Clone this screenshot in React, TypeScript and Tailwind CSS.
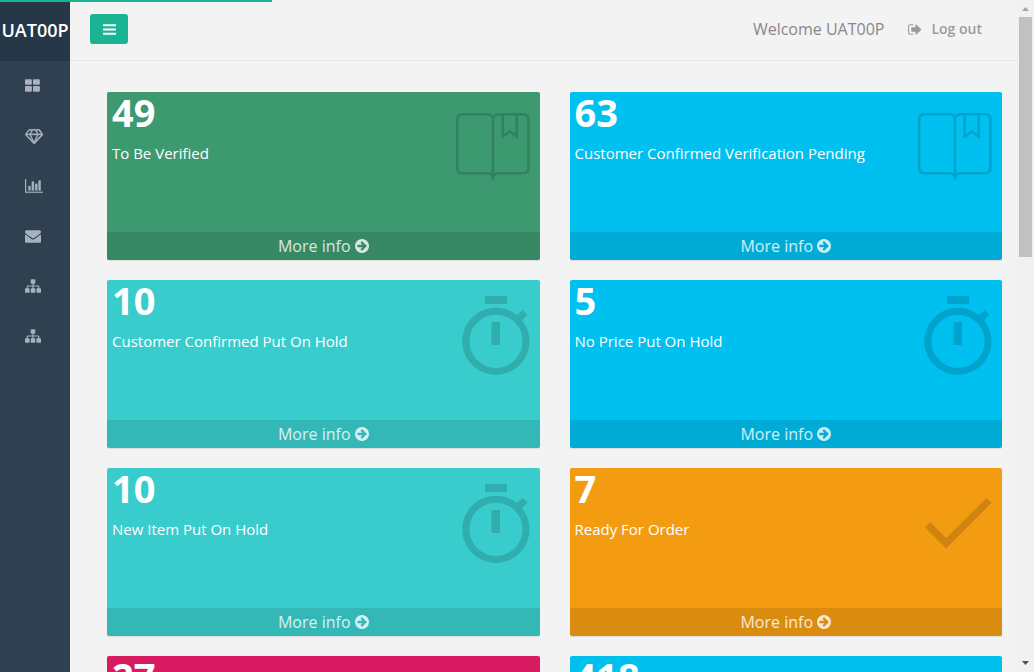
import React from "react";

type IconProps = { d: string; viewBox: string; className: string };

function Icon({ d, viewBox, className }: IconProps) {
  return (
    <svg viewBox={viewBox} className={className} fill="currentColor" aria-hidden="true">
      <path d={d} />
    </svg>
  );
}

const SQUARE = "0 0 1792 1792";
const WIDE = "0 0 2048 1792";

const thLarge =
  "M832 1024v384q0 52-38 90t-90 38h-512q-52 0-90-38t-38-90v-384q0-52 38-90t90-38h512q52 0 90 38t38 90zm0-768v384q0 52-38 90t-90 38h-512q-52 0-90-38t-38-90v-384q0-52 38-90t90-38h512q52 0 90 38t38 90zm896 768v384q0 52-38 90t-90 38h-512q-52 0-90-38t-38-90v-384q0-52 38-90t90-38h512q52 0 90 38t38 90zm0-768v384q0 52-38 90t-90 38h-512q-52 0-90-38t-38-90v-384q0-52 38-90t90-38h512q52 0 90 38t38 90z";
const diamond =
  "M212 768l623 665-300-665h-323zm812 772l349-772h-698zm-486-900l204-384h-262l-288 384h346zm675 793l623-665h-323zm-538-793h698l-204-384h-290zm835 0h346l-288-384h-262zm163-480l384 512q18 23 17 51t-21 49l-960 1024q-18 20-47 20t-47-20l-960-1024q-20-20-21-49t17-51l384-512q18-26 51-26h1152q33 0 51 26z";
const barChart =
  "M640 896v512h-256v-512h256zm384-512v1024h-256v-1024h256zm1024 1152v128h-2048v-1536h128v1408h1920zm-640-896v768h-256v-768h256zm384-384v1152h-256v-1152h256z";
const envelope =
  "M1792 710v794q0 66-47 113t-113 47h-1472q-66 0-113-47t-47-113v-794q44 49 101 87 362 246 497 345 57 42 92.5 65.5t94.5 48 110 24.5h2q51 0 110-24.5t94.5-48 92.5-65.5q170-123 498-345 57-39 100-87zm0-294q0 79-49 151t-122 123q-376 261-468 325-10 7-42.5 31t-54 38.5-52 32.5-57.5 27-50 9h-2q-23 0-50-9t-57.5-27-52-32.5-54-38.5-42.5-31q-91-64-262-182.5t-205-142.5q-62-42-117-115.5t-55-136.5q0-78 41.5-130t118.5-52h1472q65 0 112.5 47t47.5 113z";
const sitemap =
  "M1792 1248v320q0 40-28 68t-68 28h-320q-40 0-68-28t-28-68v-320q0-40 28-68t68-28h96v-192h-512v192h96q40 0 68 28t28 68v320q0 40-28 68t-68 28h-320q-40 0-68-28t-28-68v-320q0-40 28-68t68-28h96v-192h-512v192h96q40 0 68 28t28 68v320q0 40-28 68t-68 28h-320q-40 0-68-28t-28-68v-320q0-40 28-68t68-28h96v-192q0-52 38-90t90-38h512v-192h-96q-40 0-68-28t-28-68v-320q0-40 28-68t68-28h320q40 0 68 28t28 68v320q0 40-28 68t-68 28h-96v192h512q52 0 90 38t38 90v192h96q40 0 68 28t28 68z";
const bars =
  "M1664 1344v128q0 26-19 45t-45 19h-1408q-26 0-45-19t-19-45v-128q0-26 19-45t45-19h1408q26 0 45 19t19 45zm0-512v128q0 26-19 45t-45 19h-1408q-26 0-45-19t-19-45v-128q0-26 19-45t45-19h1408q26 0 45 19t19 45zm0-512v128q0 26-19 45t-45 19h-1408q-26 0-45-19t-19-45v-128q0-26 19-45t45-19h1408q26 0 45 19t19 45z";
const signOut =
  "M704 1440q0 4 1 20t.5 26.5-3 23.5-10 19.5-20.5 6.5h-320q-119 0-203.5-84.5t-84.5-203.5v-704q0-119 84.5-203.5t203.5-84.5h320q13 0 22.5 9.5t9.5 22.5q0 4 1 20t.5 26.5-3 23.5-10 19.5-20.5 6.5h-320q-66 0-113 47t-47 113v704q0 66 47 113t113 47h312l11.5 1 11.5 3 8 5.5 7 9 2 13.5zm928-544q0 26-19 45l-544 544q-19 19-45 19t-45-19-19-45v-288h-448q-26 0-45-19t-19-45v-384q0-26 19-45t45-19h448v-288q0-26 19-45t45-19 45 19l544 544q19 19 19 45z";
const arrowCircle =
  "M1413 896q0-27-18-45l-91-91-362-362q-18-18-45-18t-45 18l-91 91q-18 18-18 45t18 45l189 189h-502q-26 0-45 19t-19 45v128q0 26 19 45t45 19h502l-189 189q-19 19-19 45t19 45l91 91q18 18 45 18t45-18l362-362 91-91q18-18 18-45zm251 0q0 209-103 385.5t-279.5 279.5-385.5 103-385.5-103-279.5-279.5-103-385.5 103-385.5 279.5-279.5 385.5-103 385.5 103 279.5 279.5 103 385.5z";

const navItems = [
  { label: "Dashboard", d: thLarge, viewBox: "64 0 1792 1792", className: "h-4 w-4" },
  { label: "Products", d: diamond, viewBox: WIDE, className: "h-4 w-[18px] stroke-current stroke-[40px]" },
  { label: "Reports", d: barChart, viewBox: WIDE, className: "h-4 w-[18px] stroke-current stroke-[20px]" },
  { label: "Messages", d: envelope, viewBox: SQUARE, className: "h-4 w-4" },
  { label: "Departments", d: sitemap, viewBox: SQUARE, className: "h-4 w-4" },
  { label: "Structure", d: sitemap, viewBox: SQUARE, className: "h-4 w-4" },
];

type Art = "book" | "watch" | "check";

function CardArt({ art }: { art: Art }) {
  if (art === "book") {
    return (
      <svg viewBox="0 12 80 90" className="h-[90px] w-20" fill="none" stroke="currentColor" strokeWidth="2.6" aria-hidden="true">
        <path d="M43 90V27.5Q41 24.200 37.500 24.200H12.500Q7.200 24.200 7.200 29.500V78Q7.200 83.200 12.500 83.200H37.500Q42 83.200 43 88Q44 83.200 48.500 83.200H73Q78.500 83.200 78.500 78V29.500Q78.500 24.200 73 24.200H48.500Q45 24.200 43 27.500" />
        <path d="M52.700 25.400V46.500L59.700 41.500L66.700 46.500V25.400" />
      </svg>
    );
  }
  if (art === "watch") {
    return (
      <svg viewBox="0 0 80 90" className="h-[90px] w-20" fill="currentColor" aria-hidden="true">
        <path d="M35 6h22v8H35zM41.500 32h8.500v23h-8.500z" />
        <path
          fillRule="evenodd"
          d="M46 17.700c7.900 0 15.100 2.700 20.900 7.200L72.800 19.900L77.500 24.800L72 30.200A33.600 33.600 0 1 1 46 17.700zM46 24.700a26.600 26.600 0 1 0 0 53.200a26.600 26.600 0 1 0 0-53.200z"
        />
      </svg>
    );
  }
  return (
    <svg viewBox="0 0 80 90" className="h-[90px] w-20" fill="currentColor" aria-hidden="true">
      <path d="M12.900 49.200L18.200 44L34.100 60L74.500 20L79.500 24.800L34.100 70.500z" />
    </svg>
  );
}

const cards: { count: number; title?: string; color: string; art?: Art }[] = [
  { count: 49, title: "To Be Verified", color: "bg-[#3d9970]", art: "book" },
  { count: 63, title: "Customer Confirmed Verification Pending", color: "bg-[#00c0ef]", art: "book" },
  { count: 10, title: "Customer Confirmed Put On Hold", color: "bg-[#39cccc]", art: "watch" },
  { count: 5, title: "No Price Put On Hold", color: "bg-[#00c0ef]", art: "watch" },
  { count: 10, title: "New Item Put On Hold", color: "bg-[#39cccc]", art: "watch" },
  { count: 7, title: "Ready For Order", color: "bg-[#f39c12]", art: "check" },
  { count: 27, color: "bg-[#d81b60]" },
  { count: 418, color: "bg-[#00c0ef]" },
];

export default function App() {
  return (
    <div className="relative flex h-screen overflow-hidden bg-[#f3f3f3] font-['Open_Sans',sans-serif] text-[#676a6c]">
      <div className="absolute top-0 left-0 h-[2px] w-[272px] bg-[#1ab394]" />

      <aside className="w-[70px] shrink-0 bg-[#2f4050]">
        <div className="flex h-[61px] items-center justify-center bg-[#263848] pb-[2px] text-lg font-semibold text-white">
          UAT00P
        </div>
        <nav>
          <ul>
            {navItems.map((item) => (
              <li key={item.label}>
                <a href="#" aria-label={item.label} className="flex h-[50px] items-center pl-[25px] text-[#a7b1c2]">
                  <Icon d={item.d} viewBox={item.viewBox} className={item.className} />
                </a>
              </li>
            ))}
          </ul>
        </nav>
      </aside>

      <div className="min-w-0 flex-1 overflow-y-auto [scrollbar-width:none]">
        <header className="flex h-[61px] items-center justify-between border-b border-[#e7eaec] pr-[35px] pb-[2px] pl-5">
          <button type="button" aria-label="Toggle menu" className="flex h-[30px] w-[38px] items-center justify-center rounded-[3px] bg-[#1ab394] text-white">
            <Icon d={bars} viewBox={SQUARE} className="size-[15px]" />
          </button>
          <div className="flex items-center gap-6">
            <span className="text-base text-[#888888]">Welcome UAT00P</span>
            <a href="#" className="flex items-center gap-2 text-sm font-semibold text-[#999c9e]">
              <Icon d={signOut} viewBox="64 0 1792 1792" className="size-[15px]" />
              Log out
            </a>
          </div>
        </header>

        <main className="grid grid-cols-2 gap-x-[30px] gap-y-5 pt-[31px] pr-[15px] pb-5 pl-[37px]">
          {cards.map((card) => (
            <section key={card.title ?? card.count} className={`flex flex-col rounded-[2px] shadow-[0_1px_1px_rgba(0,0,0,0.1)] ${card.color}`}>
              <div className="flex h-[140px] justify-between pr-[10px] pl-[5px] text-white">
                <div>
                  <h3 className="text-[38px] leading-10 font-bold">{card.count}</h3>
                  {card.title && <p className="pt-[11px] text-[15px] leading-5">{card.title}</p>}
                </div>
                {card.art && (
                  <div className="pt-[10px] text-black/15">
                    <CardArt art={card.art} />
                  </div>
                )}
              </div>
              <a href="#" className="flex h-7 items-center justify-center gap-1 rounded-b-[2px] bg-black/10 text-base text-white/80">
                More info
                <Icon d={arrowCircle} viewBox="128 128 1536 1536" className="size-[14px]" />
              </a>
            </section>
          ))}
        </main>
      </div>

      <div className="flex w-[17px] shrink-0 flex-col items-center justify-between bg-[#f1f1f1]" aria-hidden="true">
        <div className="flex flex-col items-center">
          <svg viewBox="0 0 17 17" className="size-[17px] text-[#a3a3a3]" fill="currentColor">
            <path d="M5 11l3.500-4 3.500 4z" />
          </svg>
          <div className="h-60 w-[13px] bg-[#c1c1c1]" />
        </div>
        <svg viewBox="0 0 17 17" className="size-[17px] text-[#505050]" fill="currentColor">
          <path d="M5 6h7l-3.500 4z" />
        </svg>
      </div>
    </div>
  );
}
